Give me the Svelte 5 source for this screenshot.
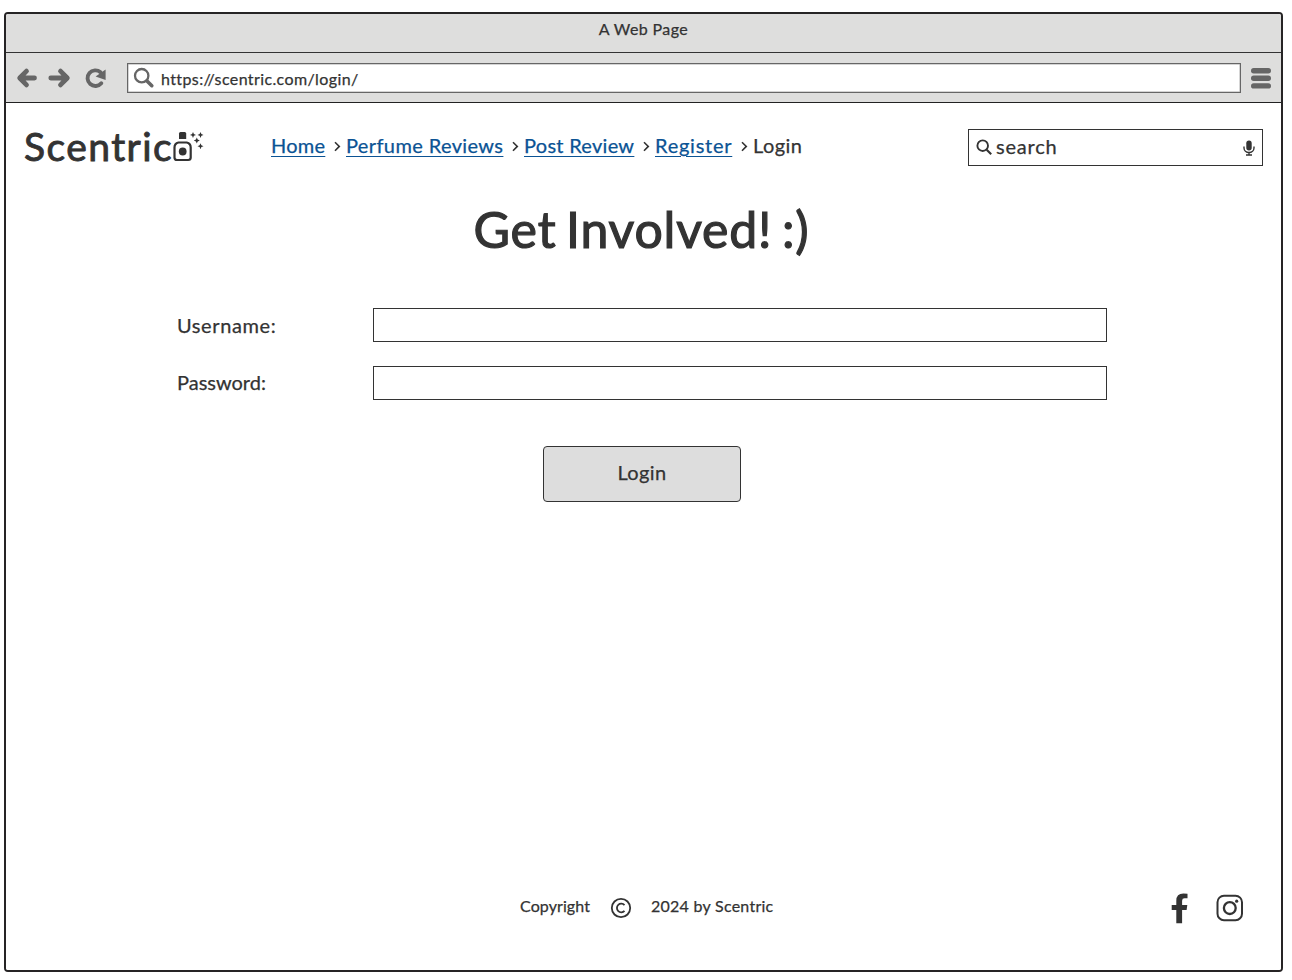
<script>
  const links = [
    { label: 'Home', width: 54, spacing: 0.25 },
    { label: 'Perfume Reviews', width: 157, spacing: 0.38 },
    { label: 'Post Review', width: 110, spacing: 0.28 },
    { label: 'Register', width: 77, spacing: 0.75 }
  ];
  const fields = ['Username:', 'Password:'];
</script>

<div class="window">
  <div class="titlebar">A Web Page</div>
  <div class="toolbar">
    <svg class="controls" width="92" height="24" viewBox="0 0 92 24">
      <g fill="none" stroke="#666" stroke-width="4.800" stroke-linecap="round" stroke-linejoin="round">
        <path d="M10.500 5.100 3.700 12l6.800 6.900M4.500 12H18.500" />
        <path d="M44.500 5.100 51.300 12l-6.800 6.900M50.500 12H34.800" />
        <path d="M85.300 17.200A7.800 7.800 0 1 1 84.500 6.300" stroke-width="3.900" />
      </g>
      <path d="M89.600 3.500v10.500L79.600 10.500z" fill="#666" />
    </svg>
    <div class="url">
      <svg width="22" height="22" viewBox="0 0 22 22" fill="none" stroke="#666">
        <circle cx="8.700" cy="8.700" r="6.700" stroke-width="2.300" />
        <path d="M14 14 18.800 18.700" stroke-width="3.600" stroke-linecap="round" />
      </svg>
      <span>https://scentric.com/login/</span>
    </div>
    <svg class="menu" width="20" height="21" viewBox="0 0 20 21" fill="#666">
      <rect width="20" height="5.400" rx="2.700" />
      <rect y="7.600" width="20" height="5.400" rx="2.700" />
      <rect y="15.200" width="20" height="5.400" rx="2.700" />
    </svg>
  </div>

  <div class="page">
    <header>
      <div class="logo">
        <span>Scentric</span>
        <svg width="31" height="32" viewBox="0 0 31 32" fill="#333">
          <path d="M7.500 1h4.200q1.500 0 1.500 1.500V8H6V2.500Q6 1 7.500 1z" />
          <path d="M5.500 11.500h8.200q4 1 4 5v10q0 2.500-2.500 2.500H4q-2.500 0-2.500-2.500v-10q0-4 4-5z" fill="none" stroke="#333" stroke-width="2.200" />
          <circle cx="9.700" cy="20.500" r="3.900" />
          <path d="M20 .9l.9 2.100 2.100.9-2.100.9-.9 2.100-.9-2.100-2.100-.9 2.100-.9z" />
          <path d="M27.500.9l.9 2.100 2.100.9-2.100.9-.9 2.100-.9-2.100-2.100-.9 2.100-.9z" />
          <path d="M23.800 6.500l.9 2.100 2.100.9-2.100.9-.9 2.100-.9-2.100-2.100-.9 2.100-.9z" />
          <path d="M27.500 12.200l.9 2.100 2.100.9-2.100.9-.9 2.100-.9-2.100-2.100-.9 2.100-.9z" />
        </svg>
      </div>
      <nav>
        {#each links as l}
          <a href="#top" style="width: {l.width}px; letter-spacing: {l.spacing}px">{l.label}</a>
          <svg width="21" height="24" viewBox="0 0 21 24"><path d="M10 9.200l4.300 4.200L10 17.700" fill="none" stroke="#333" stroke-width="1.600" /></svg>
        {/each}
        <span>Login</span>
      </nav>
      <div class="search">
        <svg width="17" height="17" viewBox="0 0 17 17" fill="none" stroke="#333">
          <circle cx="6.700" cy="6.700" r="5.300" stroke-width="1.900" />
          <path d="M10.700 10.700 15.200 15.200" stroke-width="2.100" />
        </svg>
        <span>search</span>
        <svg class="mic" width="12" height="16" viewBox="0 0 12 16">
          <rect x="3.300" y="0.500" width="5.400" height="10" rx="2.700" fill="#333" />
          <path d="M1 6.500v1.500a5 4.500 0 0 0 10 0V6.500M6 12.500V15M3 15h6" fill="none" stroke="#333" stroke-width="1.400" />
        </svg>
      </div>
    </header>

    <h1>Get Involved! :)</h1>

    <form>
      {#each fields as f, i}
        <label><span class:password={i === 1}>{f}</span><input type="text" /></label>
      {/each}
      <button type="button">Login</button>
    </form>

    <footer>
      <span class="copy">Copyright</span>
      <svg class="cc" width="22" height="22" viewBox="0 0 22 22" fill="none" stroke="#333" stroke-width="1.800">
        <circle cx="11" cy="11" r="9.200" />
        <path d="M14.500 8.200A4.300 4.300 0 1 0 14.500 13.800" />
      </svg>
      <span class="owner">2024 by Scentric</span>
      <svg class="fb" width="17" height="31" viewBox="0 0 17 31">
        <path d="M16.500.7v4.600h-3q-2.400 0-2.400 2.400v4.400h5.200l-.7 5H11.100v13.200H5.300V17.100H.7v-5h4.600V7.700Q5.300.5 12.400.5q2.300 0 4.100.2z" fill="#333" />
      </svg>
      <svg class="ig" width="28" height="28" viewBox="0 0 28 28" fill="none" stroke="#333">
        <rect x="1.500" y="1.700" width="24.500" height="24.500" rx="6.500" stroke-width="2" />
        <circle cx="13.800" cy="14.100" r="5.900" stroke-width="2.300" />
        <circle cx="20.700" cy="7.200" r="1.600" fill="#333" stroke="none" />
      </svg>
    </footer>
  </div>
</div>

<style>
  :global(body) { margin: 0; background: #fff; }
  .window {
    box-sizing: border-box;
    width: 1279px;
    height: 960px;
    margin: 12px 0 0 4px;
    display: flex;
    flex-direction: column;
    overflow: hidden;
    border: 2px solid #262425;
    border-radius: 4px;
    font-family: Lato, sans-serif;
    font-size: 20px;
    color: #333;
    -webkit-text-stroke: 0.250px currentColor;
    white-space: nowrap;
  }
  svg { display: block; flex: none; -webkit-text-stroke: 0; }
  .titlebar {
    box-sizing: border-box;
    height: 39px;
    padding-top: 4px;
    background: #dededd;
    border-bottom: 1px solid #333;
    text-align: center;
    font-size: 16px;
    line-height: 22px;
    letter-spacing: 0.4px;
  }
  .toolbar {
    box-sizing: border-box;
    height: 50px;
    padding: 0 10px;
    display: flex;
    align-items: center;
    background: #dededd;
    border-bottom: 1px solid #222;
  }
  .controls { margin: 1px 19px 0 0; }
  .url {
    box-sizing: border-box;
    flex: 1;
    height: 30px;
    display: flex;
    align-items: center;
    gap: 6px;
    padding-left: 5px;
    margin-top: 1px;
    background: #fff;
    border: 1px solid #666;
    box-shadow: inset 0 0 0 0.5px #aaa;
    font-size: 16px;
    letter-spacing: 0.39px;
  }
  .menu { margin: 1px 0 0 10px; }
  .page { flex: 1; display: flex; flex-direction: column; background: #fff; }
  header { display: flex; height: 90px; padding: 26px 18px 0; box-sizing: border-box; }
  .logo { display: flex; width: 247px; }
  .logo span { width: 149px; font-size: 39px; line-height: 34px; letter-spacing: 1.450px; -webkit-text-stroke: 0.9px #333; }
  .logo svg { margin-top: 2px; }
  nav { display: flex; flex: 1; height: 24px; margin-top: 4px; line-height: 24px; letter-spacing: 0.4px; }
  nav a { color: #0b5394; text-decoration: underline; text-underline-offset: 3px; text-decoration-thickness: 1px; }
  .search {
    box-sizing: border-box;
    width: 295px;
    height: 37px;
    display: flex;
    align-items: center;
    gap: 4px;
    padding: 0 7px 0 7px;
    border: 1px solid #333;
    letter-spacing: 0.800px;
  }
  .search span { line-height: 24px; margin: -3px 0 0 -1px; }
  .mic { margin-left: auto; }
  h1 {
    height: 60px;
    margin: 6px 4px 0 0;
    text-align: center;
    font-size: 50px;
    line-height: 60px;
    font-weight: 400;
    letter-spacing: 0.800px;
    word-spacing: -4px;
    -webkit-text-stroke: 1.200px #333;
  }
  form { display: flex; flex-direction: column; gap: 24px; padding: 49px 0 0 171px; }
  label { display: flex; width: 930px; height: 34px; line-height: 34px; letter-spacing: 0.600px; }
  label span { width: 196px; }
  label .password { line-height: 32px; letter-spacing: 0; }
  input { box-sizing: border-box; width: 734px; height: 34px; border: 1px solid #333; background: #fff; padding: 0; }
  button {
    width: 198px;
    height: 56px;
    margin: 22px 0 0 366px;
    padding: 0 0 5px;
    border: 1px solid #333;
    border-radius: 4px;
    background: #ddd;
    color: #333;
    font: inherit;
    letter-spacing: 0.4px;
    -webkit-text-stroke: inherit;
  }
  footer { display: flex; height: 31px; margin: auto 37px 46px 514px; font-size: 16px; line-height: 26px; letter-spacing: 0.100px; }
  .copy { width: 90px; }
  .cc { margin-top: 4px; }
  .owner { margin-left: 19px; letter-spacing: 0.260px; }
  .fb { margin-left: auto; }
  .ig { margin: 1px 0 0 28px; }
</style>
